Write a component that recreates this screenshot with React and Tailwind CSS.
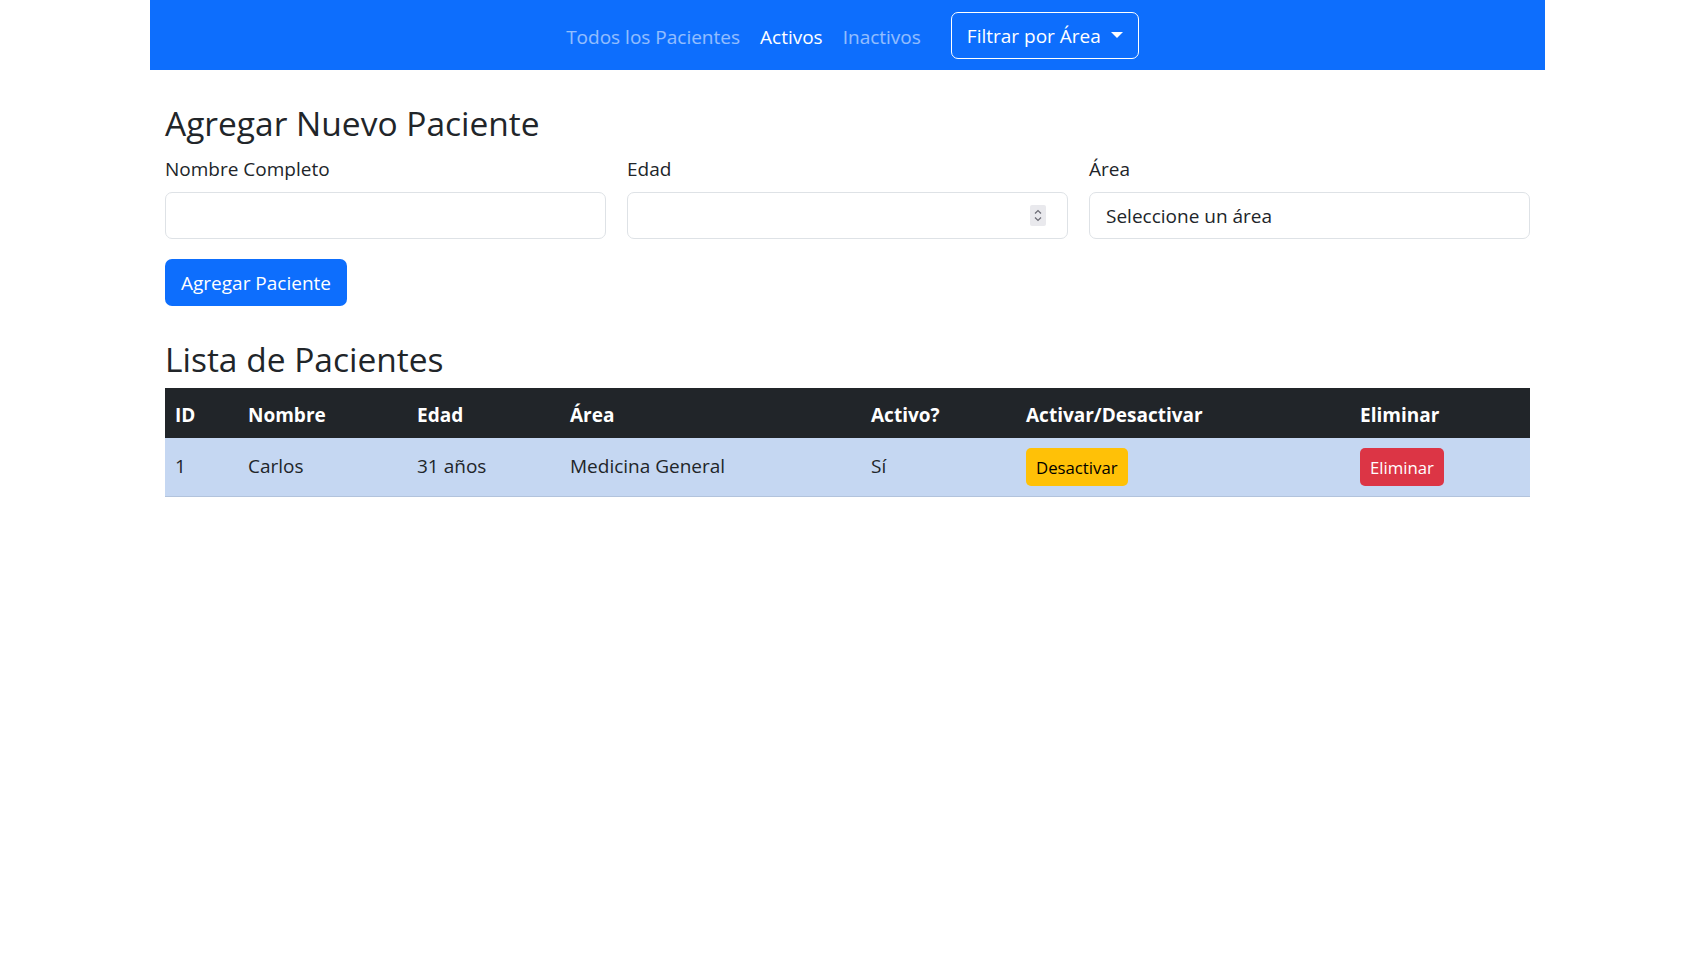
import React from 'react';

const pacientes = [
    { id: 1, nombre: 'Carlos', edad: 31, area: 'Medicina General', activo: true },
];

const columnas = [
    { label: 'ID', w: 'w-[73px]' },
    { label: 'Nombre', w: 'w-[169px]' },
    { label: 'Edad', w: 'w-[153px]' },
    { label: 'Área', w: 'w-[301px]' },
    { label: 'Activo?', w: 'w-[155px]' },
    { label: 'Activar/Desactivar', w: 'w-[334px]' },
    { label: 'Eliminar', w: 'w-[180px]' },
];

const Spinner = () => (
    <div className="w-[16px] h-[21px] bg-[#e9e9ed] rounded-[2px] flex items-center justify-center">
        <svg width="10" height="15" viewBox="0 0 10 15" fill="none" stroke="#6b6b75" strokeWidth="1.2">
            <path d="M2 5.5 L5 2.5 L8 5.5" />
            <path d="M2 9.5 L5 12.5 L8 9.5" />
        </svg>
    </div>
);

export default function App() {
    return (
        <div className="min-h-screen bg-white text-[#212529] font-['Open_Sans',sans-serif]">
            <div className="mx-auto w-[1395px]">
                {/* Navbar */}
                <nav className="h-[70px] bg-[#0d6efd] flex items-center justify-center">
                    <a className="px-[10px] pt-[4px] text-[19px] leading-[30px] text-white/55">Todos los Pacientes</a>
                    <a className="px-[10px] pt-[4px] text-[19px] leading-[30px] text-white">Activos</a>
                    <a className="px-[10px] pt-[4px] text-[19px] leading-[30px] text-white/55">Inactivos</a>
                    <button className="ml-[20px] h-[47px] pl-[15px] pr-[15px] pt-[3px] flex items-center gap-[10px] border border-white rounded-[7px] text-white text-[19px]">
                        Filtrar por Área
                        <span className="-mt-[3px] w-0 h-0 border-l-[6px] border-r-[6px] border-t-[6px] border-l-transparent border-r-transparent border-t-white" />
                    </button>
                </nav>

                <div className="px-[15px]">
                    {/* Form */}
                    <h3 className="mt-[32px] mb-[10px] text-[33.5px] leading-[42px] font-normal">Agregar Nuevo Paciente</h3>
                    <div className="grid grid-cols-3 gap-x-[21px]">
                        <div>
                            <label className="block text-[19px] leading-[30px] mb-[8px]">Nombre Completo</label>
                            <div className="h-[47px] border border-[#dee2e6] rounded-[7px]" />
                        </div>
                        <div>
                            <label className="block text-[19px] leading-[30px] mb-[8px]">Edad</label>
                            <div className="h-[47px] border border-[#dee2e6] rounded-[7px] flex items-center justify-end pr-[21px]">
                                <Spinner />
                            </div>
                        </div>
                        <div>
                            <label className="block text-[19px] leading-[30px] mb-[8px]">Área</label>
                            <div className="h-[47px] border border-[#dee2e6] rounded-[7px] flex items-center px-[16px] pt-[2px] text-[19px]">
                                Seleccione un área
                            </div>
                        </div>
                    </div>
                    <button className="mt-[20px] h-[47px] px-[16px] pt-[2px] bg-[#0d6efd] text-white text-[19px] rounded-[7px]">
                        Agregar Paciente
                    </button>

                    {/* Tabla */}
                    <h3 className="mt-[32px] mb-[8px] text-[33.5px] leading-[42px] font-normal">Lista de Pacientes</h3>
                    <table className="w-full table-fixed border-collapse text-[19px] leading-[30px]">
                        <thead>
                            <tr className="bg-[#212529] text-white">
                                {columnas.map((c) => (
                                    <th key={c.label} className={`${c.w} px-[10px] pt-[12px] pb-[8px] text-left font-bold`}>{c.label}</th>
                                ))}
                            </tr>
                        </thead>
                        <tbody>
                            {pacientes.map((p) => (
                                <tr key={p.id} className="bg-[#c5d7f2] border-b border-[#b2c3dc] align-top">
                                    <td className="px-[10px] pt-[13px] pb-[7px]">{p.id}</td>
                                    <td className="px-[10px] pt-[13px] pb-[7px]">{p.nombre}</td>
                                    <td className="px-[10px] pt-[13px] pb-[7px]">{p.edad} años</td>
                                    <td className="px-[10px] pt-[13px] pb-[7px]">{p.area}</td>
                                    <td className="px-[10px] pt-[13px] pb-[7px]">{p.activo ? 'Sí' : 'No'}</td>
                                    <td className="px-[10px] py-[10px]">
                                        <button className="h-[38px] px-[10px] pt-[2px] bg-[#ffc107] text-black text-[16.75px] rounded-[5px]">Desactivar</button>
                                    </td>
                                    <td className="px-[10px] py-[10px]">
                                        <button className="h-[38px] px-[10px] pt-[2px] bg-[#dc3545] text-white text-[16.75px] rounded-[5px]">Eliminar</button>
                                    </td>
                                </tr>
                            ))}
                        </tbody>
                    </table>
                </div>
            </div>
        </div>
    );
}
